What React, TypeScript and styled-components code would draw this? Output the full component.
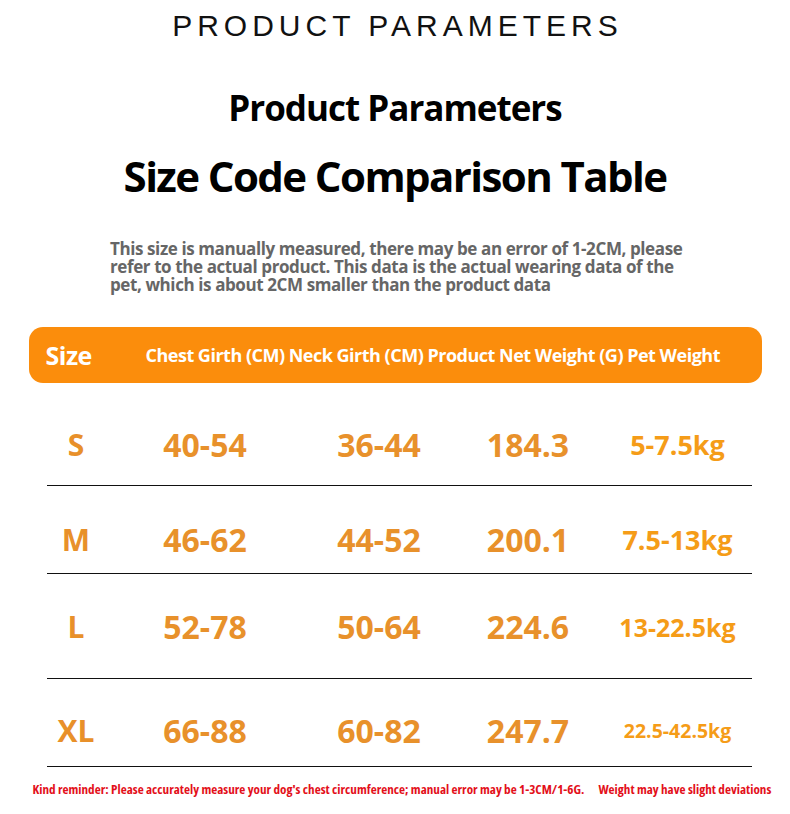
import styled, { createGlobalStyle } from 'styled-components';

const GlobalStyle = createGlobalStyle`
    html, body {
        margin: 0;
        padding: 0;
        background: #ffffff;
    }
    body {
        font-family: 'Open Sans', 'Noto Sans', sans-serif;
    }
`;

type Row = {
    size: string;
    chest: string;
    neck: string;
    weight: string;
    pet: string;
    height: number;
    bottom: number;
    petSize: number;
};

const rows: Row[] = [
    { size: 'S', chest: '40-54', neck: '36-44', weight: '184.3', pet: '5-7.5kg', height: 103, bottom: 20, petSize: 27 },
    { size: 'M', chest: '46-62', neck: '44-52', weight: '200.1', pet: '7.5-13kg', height: 88, bottom: 13, petSize: 27 },
    { size: 'L', chest: '52-78', neck: '50-64', weight: '224.6', pet: '13-22.5kg', height: 105, bottom: 31, petSize: 25 },
    { size: 'XL', chest: '66-88', neck: '60-82', weight: '247.7', pet: '22.5-42.5kg', height: 88, bottom: 15, petSize: 19.5 },
];

const App = () => {
    return (
        <Page>
            <GlobalStyle />
            <TopTitle>PRODUCT PARAMETERS</TopTitle>
            <SubTitle>Product Parameters</SubTitle>
            <MainTitle>Size Code Comparison Table</MainTitle>
            <Note>
                This size is manually measured, there may be an error of 1-2CM, please refer to the actual
                product. This data is the actual wearing data of the pet, which is about 2CM smaller than the
                product data
            </Note>
            <HeaderBar>
                <HeaderSize>Size</HeaderSize>
                <HeaderLabels>Chest Girth (CM) Neck Girth (CM) Product Net Weight (G) Pet Weight</HeaderLabels>
            </HeaderBar>
            <Table>
                {rows.map(row => (
                    <TableRow key={row.size} $height={row.height} $bottom={row.bottom}>
                        <SizeCell>{row.size}</SizeCell>
                        <ValueCell>{row.chest}</ValueCell>
                        <ValueCell>{row.neck}</ValueCell>
                        <ValueCell>{row.weight}</ValueCell>
                        <PetCell $fontSize={row.petSize}>{row.pet}</PetCell>
                    </TableRow>
                ))}
            </Table>
            <Reminder>
                <span>
                    Kind reminder: Please accurately measure your dog's chest circumference; manual error may be
                    1-3CM/1-6G.
                </span>
                <span>Weight may have slight deviations</span>
            </Reminder>
        </Page>
    );
};

export default App;

const Page = styled.div`
    width: 790px;
    height: 814px;
    overflow: hidden;
    display: flex;
    flex-direction: column;
    align-items: center;
    background: #ffffff;
`;

const TopTitle = styled.h2`
    margin: 10px 0 0;
    padding-left: 5px;
    font-family: 'Liberation Sans', Arial, sans-serif;
    font-weight: 400;
    font-size: 30px;
    line-height: 32px;
    letter-spacing: 5px;
    color: #111111;
`;

const SubTitle = styled.h1`
    margin: 44px 0 0;
    font-family: 'Open Sans', sans-serif;
    font-weight: 700;
    font-size: 35px;
    line-height: 44px;
    letter-spacing: -1px;
    color: #000000;
`;

const MainTitle = styled.h1`
    margin: 21px 0 0;
    font-family: 'Open Sans', sans-serif;
    font-weight: 700;
    font-size: 42px;
    line-height: 50px;
    letter-spacing: -1.6px;
    color: #000000;
`;

const Note = styled.p`
    margin: 39px 0 0;
    width: 574px;
    padding-left: 4px;
    font-family: 'Open Sans', sans-serif;
    font-weight: 700;
    font-size: 17px;
    line-height: 18px;
    letter-spacing: -0.4px;
    color: #666666;
`;

const HeaderBar = styled.div`
    margin-top: 33px;
    width: 733px;
    height: 56px;
    box-sizing: border-box;
    padding: 0 17px;
    border-radius: 14px;
    background: #fb8d0c;
    color: #ffffff;
    display: flex;
    align-items: center;
    font-family: 'Open Sans', sans-serif;
    font-weight: 700;
`;

const HeaderSize = styled.span`
    font-size: 25px;
    letter-spacing: -0.5px;
    width: 100px;
`;

const HeaderLabels = styled.span`
    font-size: 18px;
    letter-spacing: -0.5px;
    white-space: nowrap;
`;

const Table = styled.div`
    width: 705px;
    margin-left: 9px;
`;

const TableRow = styled.div<{ $height: number; $bottom: number }>`
    height: ${p => p.$height}px;
    box-sizing: border-box;
    padding-bottom: ${p => p.$bottom}px;
    border-bottom: 1.5px solid #111111;
    display: grid;
    grid-template-columns: 58px 200px 148px 150px 149px;
    align-items: end;
    font-family: 'Open Sans', sans-serif;
    font-weight: 700;
    text-align: center;
    white-space: nowrap;
`;

const SizeCell = styled.div`
    font-size: 30px;
    line-height: 40px;
    color: #e8902a;
`;

const ValueCell = styled.div`
    font-size: 32px;
    line-height: 40px;
    color: #e8912b;
`;

const PetCell = styled.div<{ $fontSize: number }>`
    font-size: ${p => p.$fontSize}px;
    line-height: 40px;
    color: #f59c18;
`;

const Reminder = styled.div`
    margin-top: 15px;
    width: 737px;
    box-sizing: border-box;
    padding-left: 6px;
    display: flex;
    gap: 14px;
    font-family: 'Open Sans', sans-serif;
    font-stretch: 75%;
    font-weight: 700;
    font-size: 13.15px;
    line-height: 14px;
    color: #e3101a;
    white-space: nowrap;
`;
